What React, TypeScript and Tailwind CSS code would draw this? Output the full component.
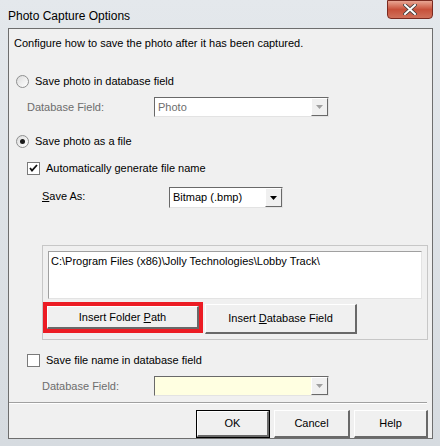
import React from "react";

const F = { fontFamily: '"Liberation Sans", Arial, sans-serif' };

function Radio({ checked }: { checked?: boolean }) {
  return (
    <div className="w-[13px] h-[13px] rounded-full border border-[#8e8f8f] bg-gradient-to-br from-[#dcdcdc] to-[#ffffff] flex items-center justify-center shrink-0">
      {checked && <div className="w-[5px] h-[5px] rounded-full bg-[#1a1a1a]" />}
    </div>
  );
}

function Check({ checked }: { checked?: boolean }) {
  return (
    <div className="w-[13px] h-[13px] border border-[#7a7a7a] bg-white flex items-center justify-center shrink-0">
      {checked && (
        <svg width="9" height="9" viewBox="0 0 9 9">
          <path d="M1 4 L3 6.5 L8 1" stroke="#111" strokeWidth="1.8" fill="none" />
        </svg>
      )}
    </div>
  );
}

function Combo({ text, w, h, bg, disabled }: { text: string; w: string; h: string; bg: string; disabled?: boolean }) {
  return (
    <div className={`${w} ${h} ${bg} flex border-t border-l border-t-[#696969] border-l-[#696969] border-b border-r border-b-[#e3e3e3] border-r-[#e3e3e3]`}>
      <div className={`flex-1 flex items-center pl-[3px] text-[11px] ${disabled ? "text-[#6d6d6d]" : "text-black"}`}>{text}</div>
      <div className="w-[17px] h-full bg-[#f0f0f0] border-t border-l border-t-[#ffffff] border-l-[#ffffff] border-b border-r border-b-[#696969] border-r-[#696969] flex items-center justify-center">
        <svg width="7" height="4" viewBox="0 0 7 4">
          <path d="M0 0 H7 L3.5 4 Z" fill={disabled ? "#a0a0a0" : "#000"} />
        </svg>
      </div>
    </div>
  );
}

function Btn({ children, cls }: { children: React.ReactNode; cls: string }) {
  return (
    <div className={`${cls} bg-[#f0f0f0] border-t border-l border-t-[#ffffff] border-l-[#ffffff] border-b-2 border-r-2 border-b-[#696969] border-r-[#696969] flex items-center justify-center text-[11px] text-black`}>
      {children}
    </div>
  );
}

export default function App() {
  return (
    <div className="w-[440px] h-[446px] bg-gradient-to-b from-[#e4e8ec] to-[#d6dbe0] overflow-hidden flex flex-col" style={F}>
      <div className="h-[28px] flex items-start justify-between">
        <div className="pl-[8px] pt-[7px] text-[12px] text-black">Photo Capture Options</div>
        <div className="mr-[7px] w-[46px] h-[19px] rounded-b-[4px] border border-[#7a2a20] bg-gradient-to-b from-[#e8a593] via-[#c7503a] to-[#d0705a] flex items-center justify-center">
          <svg width="14" height="11" viewBox="0 0 14 11">
            <path d="M2 1 L12 10 M12 1 L2 10" stroke="#3a3a3a" strokeWidth="3.6" strokeLinecap="square" />
            <path d="M2 1 L12 10 M12 1 L2 10" stroke="#ffffff" strokeWidth="2" strokeLinecap="square" />
          </svg>
        </div>
      </div>
      <div className="ml-[8px] mr-[7px] h-[411px] bg-[#f0f0f0] border border-[#6e6e6e] flex flex-col text-[11px] text-black">
        <div className="mt-[7px] ml-[5px] h-[14px] leading-[14px]">Configure how to save the photo after it has been captured.</div>

        <div className="mt-[24px] ml-[7px] h-[14px] flex items-center gap-[6px]">
          <Radio />
          <span>Save photo in database field</span>
        </div>

        <div className="mt-[9px] ml-[18px] flex items-center">
          <span className="w-[127px] text-[#6d6d6d]">Database Field:</span>
          <Combo text="Photo" w="w-[175px]" h="h-[20px]" bg="bg-white" disabled />
        </div>

        <div className="mt-[17px] ml-[7px] h-[14px] flex items-center gap-[6px]">
          <Radio checked />
          <span>Save photo as a file</span>
        </div>

        <div className="mt-[13px] ml-[18px] h-[14px] flex items-center gap-[6px]">
          <Check checked />
          <span>Automatically generate file name</span>
        </div>

        <div className="mt-[12px] ml-[33px] flex items-start">
          <span className="w-[127px] pt-[1px]"><span className="underline">S</span>ave As:</span>
          <Combo text="Bitmap (.bmp)" w="w-[114px]" h="h-[21px]" bg="bg-white" />
        </div>

        <div className="mt-[37px] ml-[33px] w-[386px] h-[95px] border border-[#c7c7c7] flex flex-col pl-[5px]">
          <div className="mt-[5px] w-[374px] h-[48px] bg-white border-t border-l border-t-[#a0a0a0] border-l-[#a0a0a0] border-b border-r border-b-[#e3e3e3] border-r-[#e3e3e3] pl-[2px] pt-[2px] leading-[14px]">
            C:\Program Files (x86)\Jolly Technologies\Lobby Track\
          </div>
          <div className="mt-[3px] flex items-start">
            <div className="w-[160px] h-[31px] border-[4px] border-[#ec1c24] -ml-[5px] flex">
              <Btn cls="flex-1">
                <span>Insert Folder <span className="underline">P</span>ath</span>
              </Btn>
            </div>
            <Btn cls="ml-[2px] mt-[2px] w-[152px] h-[30px]">
              <span>Insert <span className="underline">D</span>atabase Field</span>
            </Btn>
          </div>
        </div>

        <div className="mt-[13px] ml-[18px] h-[14px] flex items-center gap-[6px]">
          <Check />
          <span>Save file name in database field</span>
        </div>

        <div className="mt-[9px] ml-[33px] flex items-center">
          <span className="w-[112px] text-[#6d6d6d]">Database Field:</span>
          <Combo text="" w="w-[175px]" h="h-[20px]" bg="bg-[#ffffe1]" disabled />
        </div>

        <div className="mt-[6px] w-[418px] border-t border-[#a0a0a0] border-b border-b-white" />

        <div className="mt-[6px] flex justify-end pr-[4px] gap-[4px]">
          <div className="w-[74px] h-[28px] border border-black flex">
            <Btn cls="flex-1">OK</Btn>
          </div>
          <Btn cls="w-[76px] h-[28px]">Cancel</Btn>
          <Btn cls="w-[74px] h-[28px]">Help</Btn>
        </div>
      </div>
    </div>
  );
}
